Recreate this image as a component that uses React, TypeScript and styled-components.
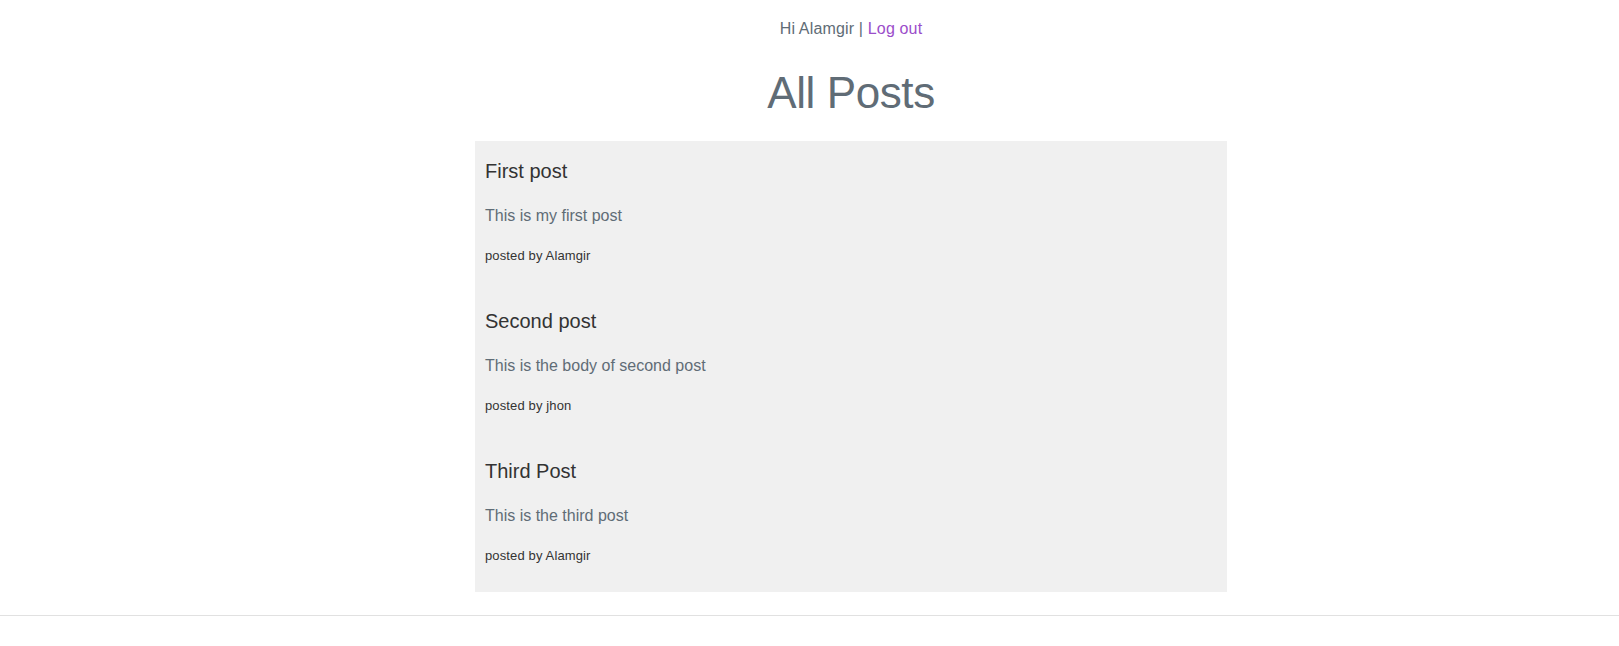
import { createGlobalStyle, styled } from 'styled-components';

type Post = {
  id: number;
  title: string;
  body: string;
  author: string;
};

const posts: Post[] = [
  { id: 1, title: 'First post', body: 'This is my first post', author: 'Alamgir' },
  { id: 2, title: 'Second post', body: 'This is the body of second post', author: 'jhon' },
  { id: 3, title: 'Third Post', body: 'This is the third post', author: 'Alamgir' },
];

const GlobalStyle = createGlobalStyle`
  html, body {
    margin: 0;
    padding: 0;
    background: #fff;
  }
  body {
    font-family: 'Liberation Sans', Arial, sans-serif;
    color: #606c76;
  }
`;

const Page = styled.div`
  padding-left: 83px;
`;

const Nav = styled.nav`
  padding-top: 17px;
  font-size: 16px;
  line-height: 24px;
  letter-spacing: 0.01em;
  text-align: center;
  color: #606c76;
`;

const LogoutLink = styled.a`
  color: #9b4dca;
  text-decoration: none;
  cursor: pointer;
`;

const Title = styled.h1`
  margin: 26px 0 22px;
  font-size: 44px;
  font-weight: normal;
  line-height: 52px;
  letter-spacing: -0.4px;
  text-align: center;
  color: #606c76;
`;

const PostList = styled.section`
  width: 752px;
  margin: 0 auto;
  padding: 0 10px 1px;
  box-sizing: border-box;
  background: #f0f0f0;
`;

const PostItem = styled.article`
  padding: 18px 0 25px;
`;

const PostTitle = styled.h3`
  margin: 0 0 21px;
  font-size: 20px;
  font-weight: normal;
  line-height: 24px;
  color: #333;
`;

const PostBody = styled.p`
  margin: 0 0 18px;
  font-size: 16px;
  line-height: 24px;
  color: #606c76;
`;

const PostMeta = styled.p`
  margin: 0;
  font-size: 13px;
  line-height: 20px;
  letter-spacing: 0.01em;
  color: #333;
`;

const Divider = styled.hr`
  margin: 23px 0 0;
  border: 0;
  border-top: 1px solid #e1e1e1;
`;

const App = () => {
  return (
    <>
      <GlobalStyle />
      <Page>
        <Nav>
          Hi Alamgir | <LogoutLink>Log out</LogoutLink>
        </Nav>
        <Title>All Posts</Title>
        <PostList>
          {posts.map((post) => (
            <PostItem key={post.id}>
              <PostTitle>{post.title}</PostTitle>
              <PostBody>{post.body}</PostBody>
              <PostMeta>posted by {post.author}</PostMeta>
            </PostItem>
          ))}
        </PostList>
      </Page>
      <Divider />
    </>
  );
};

export default App;
